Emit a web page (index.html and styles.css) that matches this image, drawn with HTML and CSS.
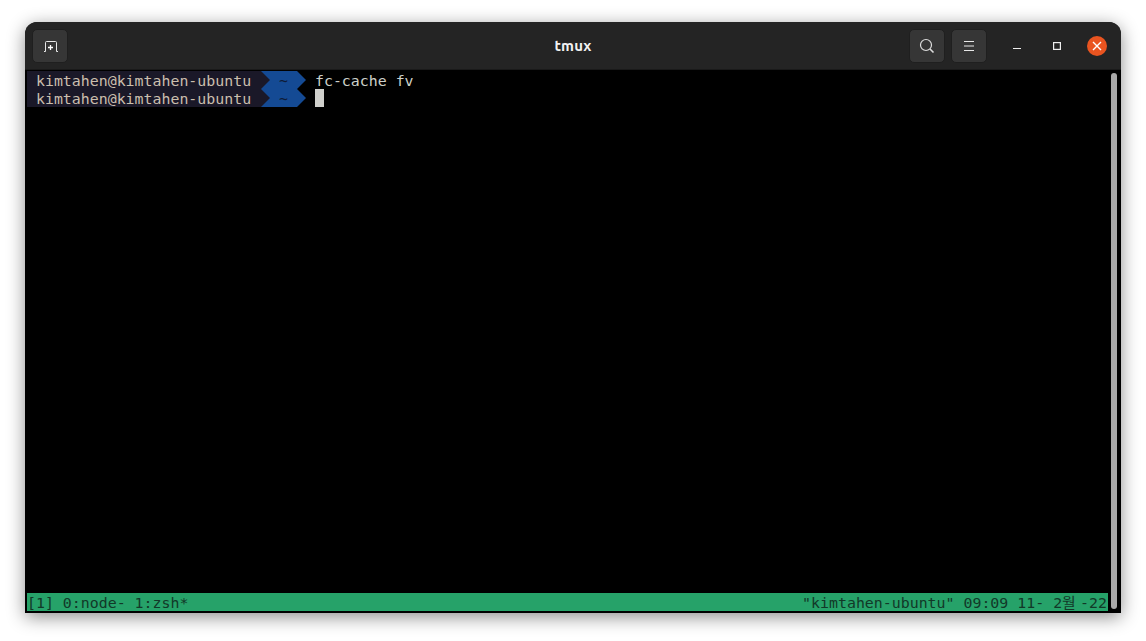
FILE: index.html
```html
<!DOCTYPE html>
<html lang="en">
<head>
<meta charset="utf-8">
<title>tmux</title>
<link rel="stylesheet" href="styles.css">
</head>
<body>
<div class="window">
  <header class="titlebar">
    <button class="hb-btn" aria-label="New tab">
      <svg width="16" height="16" viewBox="0 0 16 16" class="ic"><path d="M2 13.500H3.500V4.500Q3.500 3.500 4.500 3.500H13.500Q14.500 3.500 14.500 4.500V13.500H16" fill="none" stroke="#e8e8e8" stroke-width="1"/><path d="M8.500 7V12M6 9.500H11" fill="none" stroke="#fff" stroke-width="1.300"/></svg>
    </button>
    <div class="title">tmux</div>
    <div class="hb-right">
      <button class="hb-btn" aria-label="Search">
        <svg width="16" height="16" viewBox="0 0 16 16" class="ic"><circle cx="7" cy="7" r="5.500" fill="none" stroke="#ddd" stroke-width="1.200"/><path d="M11 11L14.500 14.500" stroke="#ddd" stroke-width="1.600"/></svg>
      </button>
      <button class="hb-btn" aria-label="Menu">
        <svg width="16" height="16" viewBox="0 0 16 16" class="ic"><path d="M3 3.500H13M3 8H13M3 12.500H13" stroke="#e8e8e8" stroke-width="1"/></svg>
      </button>
      <div class="wm">
        <span class="wm-btn"><svg width="10" height="10" viewBox="0 0 10 10"><path d="M1 7.500H9" stroke="#eee" stroke-width="1"/></svg></span>
        <span class="wm-btn"><svg width="10" height="10" viewBox="0 0 10 10"><rect x="1.600" y="1.600" width="6.800" height="6.800" fill="none" stroke="#eee" stroke-width="1.200"/></svg></span>
        <span class="wm-btn close"><svg width="10" height="10" viewBox="0 0 10 10"><path d="M1 1L9 9M9 1L1 9" stroke="#fff" stroke-width="1.400"/></svg></span>
      </div>
    </div>
  </header>
  <main class="terminal">
    <div class="screen">
      <div class="output">
        <div class="row">
          <span class="host"> kimtahen@kimtahen-ubuntu </span>
          <svg class="arrow" width="9" height="18" viewBox="0 0 9 18"><rect width="9" height="18" fill="#144a94"/><path d="M0 0L9 9L0 18Z" fill="#1a1828"/></svg>
          <span class="dir"> ~ </span>
          <svg class="arrow" width="9" height="18" viewBox="0 0 9 18"><path d="M0 0L9 9L0 18Z" fill="#144a94"/></svg>
          <span class="cmd"> fc-cache fv</span>
        </div>
        <div class="row">
          <span class="host"> kimtahen@kimtahen-ubuntu </span>
          <svg class="arrow" width="9" height="18" viewBox="0 0 9 18"><rect width="9" height="18" fill="#144a94"/><path d="M0 0L9 9L0 18Z" fill="#1a1828"/></svg>
          <span class="dir"> ~ </span>
          <svg class="arrow" width="9" height="18" viewBox="0 0 9 18"><path d="M0 0L9 9L0 18Z" fill="#144a94"/></svg>
          <span class="cmd"> </span><span class="cursor"></span>
        </div>
      </div>
      <div class="status">
        <span class="st">[1] 0:node- 1:zsh*</span>
        <span class="st">"kimtahen-ubuntu" 09:09 11- 2<span class="wide">월</span>-22</span>
      </div>
    </div>
    <div class="scroll-track"><div class="scroll-thumb"></div></div>
  </main>
</div>
</body>
</html>
```
FILE: styles.css
```css
* { box-sizing: border-box; }
html, body { margin: 0; height: 100%; background: #fff; overflow: hidden; }
body { padding: 22px 25px 28px 25px; }
.window {
  height: 591px;
  display: flex;
  flex-direction: column;
  background: #242424;
  border-radius: 12px 12px 0 0;
  box-shadow: 0 4px 18px rgba(0,0,0,.45);
}
.titlebar {
  height: 48px;
  flex: none;
  display: flex;
  align-items: center;
  justify-content: space-between;
  padding: 1px 14px 0 7px;
  background: #242424;
  border-bottom: 1px solid #1a1a1a;
  border-radius: 12px 12px 0 0;
  position: relative;
}
.title {
  position: absolute;
  left: 0;
  right: 0;
  margin-top: -2px;
  text-align: center;
  font: 700 15px "Ubuntu", "Noto Sans", "Open Sans", sans-serif;
  letter-spacing: .2px;
  color: #f2f2f2;
  pointer-events: none;
}
.hb-btn {
  width: 36px;
  height: 34px;
  padding: 0;
  display: flex;
  align-items: center;
  justify-content: center;
  background: #363636;
  border: 1px solid #1f1f1f;
  border-radius: 5px;
}
.hb-btn svg { overflow: visible; }
.hb-right { display: flex; align-items: center; gap: 6px; }
.wm { display: flex; align-items: center; gap: 20px; margin-left: 14px; }
.wm-btn { width: 20px; height: 20px; display: flex; align-items: center; justify-content: center; border-radius: 50%; }
.close { background: #e95420; }
.terminal {
  flex: 1;
  min-height: 0;
  display: flex;
  background: #000;
  padding: 1px 2px 2px 2px;
  position: relative;
  min-width: 0;
}
.screen {
  flex: 1;
  display: flex;
  flex-direction: column;
  justify-content: space-between;
  min-width: 0;
  font: 14.900px/20px "DejaVu Sans Mono", "Noto Sans CJK KR", monospace;
}
.row { display: flex; height: 18px; }
.row span, .st { white-space: pre; }
.host { background: #1a1828; color: #cbbfae; width: 234px; }
.arrow { display: block; flex: none; }
.dir { background: #144a94; color: #0e1c38; width: 27px; }
.cmd { color: #cdd1c9; width: 9px; }
.cmd:last-child { width: auto; }
.cursor { width: 9px; height: 18px; background: #d0d0cc; }
.status {
  height: 18px;
  display: flex;
  justify-content: space-between;
  background: #26a269;
  color: #123828;
  padding-right: 1px;
}
.wide { display: inline-block; width: 18px; line-height: 18px; }
.scroll-track { width: 11px; flex: none; position: relative; }
.scroll-track .scroll-thumb {
  position: absolute;
  left: 3px;
  top: 2px;
  bottom: 2px;
  width: 6px;
  background: #a8a8a8;
  border-radius: 3px;
}
```
